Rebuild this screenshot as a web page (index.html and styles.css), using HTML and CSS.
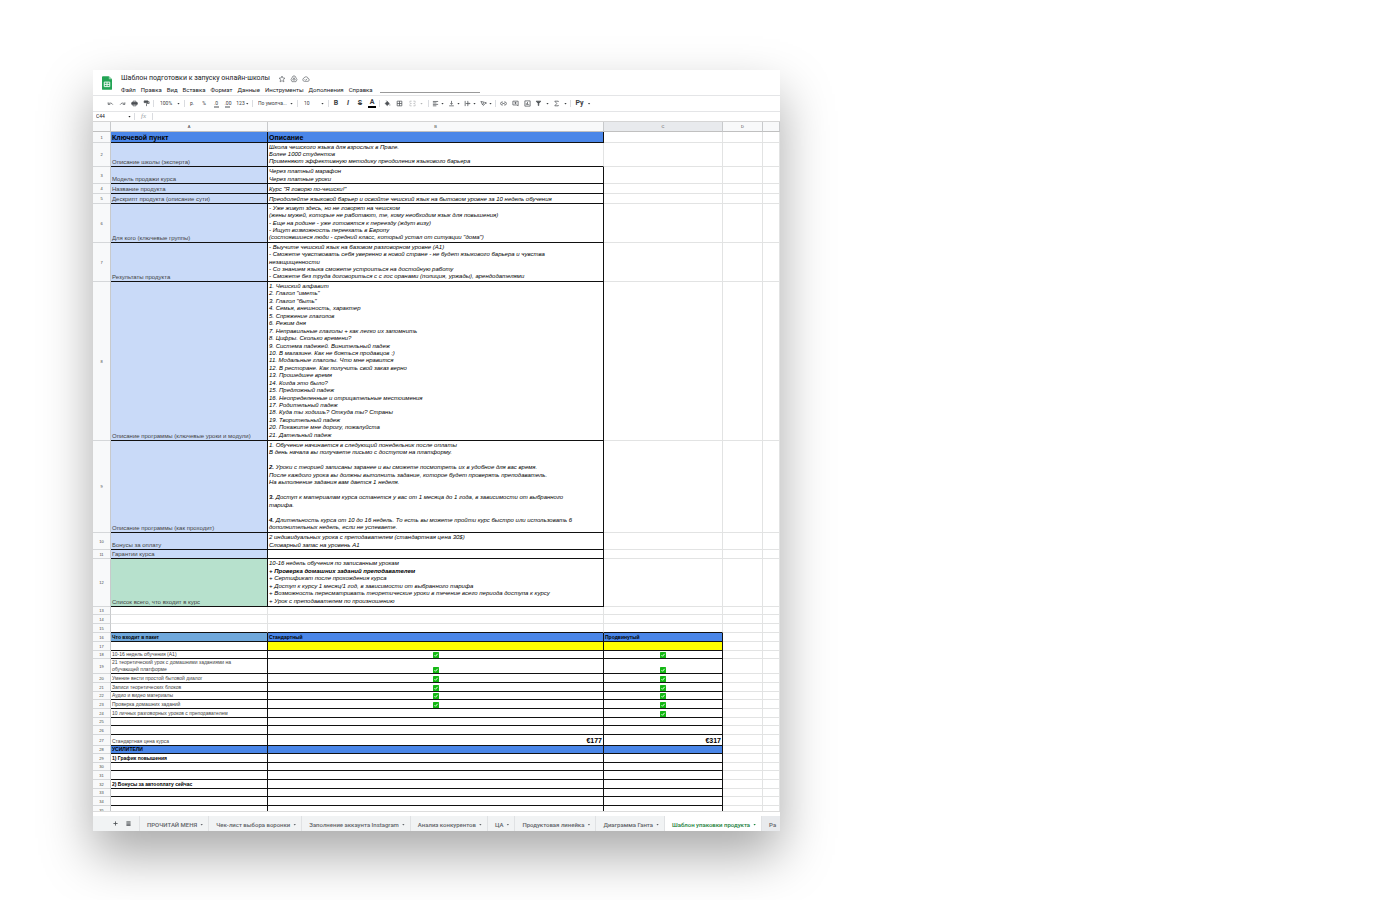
FILE: index.html
```html
<!DOCTYPE html>
<html lang="ru">
<head>
  <meta charset="UTF-8" />
  <meta name="viewport" content="width=device-width, initial-scale=1" />
  <title>Шаблон подготовки к запуску онлайн-школы</title>
  <link rel="stylesheet" href="styles.css">
</head>
<body>
  <svg class="defs" aria-hidden="true">
    <symbol id="check" viewBox="0 0 12 12">
      <rect width="12" height="12" rx="1" fill="#13b713"/>
      <path d="M3 6.5l2 2L9.3 3.6" fill="none" stroke="#fff" stroke-width="1.8"/>
    </symbol>
  </svg>

  <main class="sheet">
    <header class="header">
      <svg class="logo" viewBox="0 0 22 30">
        <path d="M2 0h13l7 7v21a2 2 0 0 1-2 2H2a2 2 0 0 1-2-2V2a2 2 0 0 1 2-2z" fill="#23a455"/>
        <path d="M15 0l7 7h-7z" fill="#8ed1a9"/>
        <path d="M5 13h12v10H5zM5 18h12M11 13v10" fill="none" stroke="#fff" stroke-width="2"/>
      </svg>
      <div class="heading">
        <div class="title-row">
          <h1>Шаблон подготовки к запуску онлайн-школы</h1>
          <button class="mini" aria-label="Пометить"><svg viewBox="0 0 24 24"><path d="M12 3l2.700 6 6.300.6-4.800 4.300 1.400 6.600L12 17l-5.600 3.500 1.400-6.600L3 9.600 9.300 9z"/></svg></button>
          <button class="mini" aria-label="Переместить"><svg viewBox="0 0 24 24"><path d="M9 3h6l6 11-3 6H6l-3-6zM12 8l-4 7h8z"/></svg></button>
          <button class="mini" aria-label="Сохранено"><svg viewBox="0 0 24 24"><path d="M7 19a5 5 0 0 1-1-9.800 6.500 6.500 0 0 1 12.300 1A4.500 4.500 0 0 1 18 19zM8 13l3 3 5-5"/></svg></button>
        </div>
        <nav class="menu">
          <button>Файл</button>
          <button>Правка</button>
          <button>Вид</button>
          <button>Вставка</button>
          <button>Формат</button>
          <button>Данные</button>
          <button>Инструменты</button>
          <button>Дополнения</button>
          <button>Справка</button>
          <span class="saved"></span>
        </nav>
      </div>
    </header>

    <div class="toolbar">
      <button class="tool" aria-label="Отменить"><svg viewBox="0 0 24 24"><path d="M4 8v7h7M5 14c4-5 11-5 15 2"/></svg></button>
      <button class="tool" aria-label="Повторить"><svg viewBox="0 0 24 24"><path d="M20 8v7h-7M19 14c-4-5-11-5-15 2"/></svg></button>
      <button class="tool" aria-label="Печать"><svg viewBox="0 0 24 24"><path d="M7 8V4h10v4M6 16H3V9h18v7h-3M7 14h10v6H7z"/><path class="fill" d="M3 9h18v5H3z"/></svg></button>
      <button class="tool" aria-label="Формат"><svg viewBox="0 0 24 24"><path class="fill" d="M4 3h13v6H4z"/><path d="M17 6h4v6h-9v9"/></svg></button>
      <span class="sep"></span>
      <label class="picker picker-zoom"><select aria-label="Масштаб"><option>100%</option></select><i class="caret"></i></label>
      <span class="sep"></span>
      <button class="tool">р.</button>
      <button class="tool">%</button>
      <button class="tool decimals">.0<svg class="under" viewBox="0 0 12 4"><path d="M12 2H2"/></svg></button>
      <button class="tool decimals">.00<svg class="under" viewBox="0 0 12 4"><path d="M0 2h10"/></svg></button>
      <button class="tool wide">123<i class="caret"></i></button>
      <span class="sep"></span>
      <label class="picker picker-font"><select aria-label="Шрифт"><option>По умолча...</option></select><i class="caret"></i></label>
      <span class="sep"></span>
      <label class="picker picker-size"><select aria-label="Размер"><option>10</option></select><i class="caret"></i></label>
      <span class="sep"></span>
      <button class="tool letter">B</button>
      <button class="tool letter italic">I</button>
      <button class="tool letter strike">S</button>
      <button class="tool letter"><span class="text-color">A</span></button>
      <span class="sep"></span>
      <button class="tool" aria-label="Заливка"><svg viewBox="0 0 24 24"><path class="fill" d="M4 12l7-7 7 7-7 7z"/><path d="M8 2l4 4M20 15v4"/></svg></button>
      <button class="tool" aria-label="Границы"><svg viewBox="0 0 24 24"><path d="M4 4h16v16H4zM4 12h16M12 4v16"/></svg></button>
      <button class="tool merge" aria-label="Объединить"><svg viewBox="0 0 24 24"><path d="M9 4H3v5M15 4h6v5M9 20H3v-5M15 20h6v-5M3 12h6M15 12h6"/></svg><i class="caret"></i></button>
      <span class="sep"></span>
      <button class="tool drop" aria-label="По горизонтали"><svg viewBox="0 0 24 24"><path d="M3 5h18M3 10h12M3 15h18M3 20h12"/></svg><i class="caret"></i></button>
      <button class="tool drop" aria-label="По вертикали"><svg viewBox="0 0 24 24"><path d="M4 20h16M12 3v12M8 11l4 4 4-4"/></svg><i class="caret"></i></button>
      <button class="tool drop" aria-label="Перенос"><svg viewBox="0 0 24 24"><path d="M4 3v18M13 3v18M6 12h14M17 9l3 3-3 3"/></svg><i class="caret"></i></button>
      <button class="tool drop" aria-label="Поворот"><svg viewBox="0 0 24 24"><path d="M3 5l6 12 4-9M3 5l13 3M10 20L21 9M17 9h4v4"/></svg><i class="caret"></i></button>
      <span class="sep"></span>
      <button class="tool" aria-label="Ссылка"><svg viewBox="0 0 24 24"><path d="M10 7H7a5 5 0 0 0 0 10h3M14 7h3a5 5 0 0 1 0 10h-3M8 12h8"/></svg></button>
      <button class="tool" aria-label="Комментарий"><svg viewBox="0 0 24 24"><path d="M3 4h18v16l-4-3H3zM12 7v7M8 10h8"/></svg></button>
      <button class="tool" aria-label="Диаграмма"><svg viewBox="0 0 24 24"><path d="M3 3h18v18H3zM8 17v-6M12 17V7M16 17v-3"/></svg></button>
      <button class="tool drop-lg" aria-label="Фильтр"><svg viewBox="0 0 24 24"><path class="fill" d="M4 4h16l-7 8v7h-2v-7z"/></svg><i class="caret"></i></button>
      <button class="tool drop-lg" aria-label="Функции"><svg viewBox="0 0 24 24"><path d="M18 7V4H6l7 8-7 8h12v-3"/></svg><i class="caret"></i></button>
      <span class="sep"></span>
      <button class="tool letter script">Ру<i class="caret"></i></button>
    </div>

    <div class="formula-bar">
      <input class="cell-name" type="text" value="C44" aria-label="Ячейка">
      <i class="caret"></i>
      <span class="sep"></span>
      <label class="fx" for="formula">fx</label>
      <span class="sep"></span>
      <input class="formula" id="formula" type="text">
    </div>

    <div class="grid">
      <table>
        <colgroup>
          <col class="col-num"><col class="col-a"><col><col class="col-c"><col class="col-d"><col class="col-e">
        </colgroup>
        <thead>
          <tr><th></th><th>A</th><th>B</th><th class="active">C</th><th>D</th><th></th></tr>
        </thead>
        <tbody class="plan">
          <tr class="h11 head"><th>1</th><td>Ключевой пункт</td><td>Описание</td><td></td><td></td><td></td></tr>
          <tr class="h24 open"><th>2</th><td>Описание школы (эксперта)</td><td><div class="lines">
            <span>Школа чешского языка для взрослых в Праге.</span>
            <span>Более 1000 студентов</span>
            <span>Применяют эффективную методику преодоления языкового барьера</span>
          </div></td><td></td><td></td><td></td></tr>
          <tr class="h17"><th>3</th><td>Модель продажи курса</td><td><div class="lines">
            <span>Через платный марафон</span>
            <span>Через платные уроки</span>
          </div></td><td></td><td></td><td></td></tr>
          <tr class="h10"><th>4</th><td>Название продукта</td><td>Курс "Я говорю по-чешски!"</td><td></td><td></td><td></td></tr>
          <tr class="h10"><th>5</th><td>Дескрипт продукта (описание сути)</td><td>Преодолейте языковой барьер и освойте чешский язык на бытовом уровне за 10 недель обучения</td><td></td><td></td><td></td></tr>
          <tr class="h39"><th>6</th><td>Для кого (ключевые группы)</td><td><div class="lines">
            <span>- Уже живут здесь, но не говорят на чешском</span>
            <span>(жены мужей, которые не работают, те, кому необходим язык для повышения)</span>
            <span>- Еще на родине - уже готовятся к переезду (ждут визу)</span>
            <span>- Ищут возможность переехать в Европу</span>
            <span>(состоявшиеся люди - средний класс, который устал от ситуации "дома")</span>
          </div></td><td></td><td></td><td></td></tr>
          <tr class="h39"><th>7</th><td>Результаты продукта</td><td><div class="lines">
            <span>- Выучите чешский язык на базовом разговорном уровне (А1)</span>
            <span>- Сможете чувствовать себя уверенно в новой стране - не будет языкового барьера и чувства</span>
            <span>незащищенности</span>
            <span>- Со знанием языка сможете устроиться на достойную работу</span>
            <span>- Сможете без труда договориться с с гос оранами (полиция, уржады), арендодателями</span>
          </div></td><td></td><td></td><td></td></tr>
          <tr class="h159"><th>8</th><td>Описание программы (ключевые уроки и модули)</td><td><div class="lines">
            <span>1. Чешский алфавит</span>
            <span>2. Глагол "иметь"</span>
            <span>3. Глагол "быть"</span>
            <span>4. Семья, внешность, характер</span>
            <span>5. Спряжение глаголов</span>
            <span>6. Режим дня</span>
            <span>7. Неправильные глаголы + как легко их запомнить</span>
            <span>8. Цифры. Сколько времени?</span>
            <span>9. Система падежей. Винительный падеж</span>
            <span>10. В магазине. Как не бояться продавцов :)</span>
            <span>11. Модальные глаголы. Что мне нравится</span>
            <span>12. В ресторане. Как получить свой заказ верно</span>
            <span>13. Прошедшее время</span>
            <span>14. Когда это было?</span>
            <span>15. Предложный падеж</span>
            <span>16. Неопределенные и отрицательные местоимения</span>
            <span>17. Родительный падеж</span>
            <span>18. Куда ты ходишь? Откуда ты? Страны</span>
            <span>19. Творительный падеж</span>
            <span>20. Покажите мне дорогу, пожалуйста</span>
            <span>21. Дательный падеж</span>
          </div></td><td></td><td></td><td></td></tr>
          <tr class="h92"><th>9</th><td>Описание программы (как проходит)</td><td><div class="lines">
            <span>1. Обучение начинается в следующий понедельник после оплаты</span>
            <span>В день начала вы получаете письмо с доступом на платформу.</span>
            <span></span>
            <span><b>2.</b> Уроки с теорией записаны заранее и вы сможете посмотреть их в удобное для вас время.</span>
            <span>После каждого урока вы должны выполнить задание, которое будет проверять преподаватель.</span>
            <span>На выполнение задания вам дается 1 неделя.</span>
            <span></span>
            <span><b>3.</b> Доступ к материалам курса останется у вас от 1 месяца до 1 года, в зависимости от выбранного</span>
            <span>тарифа.</span>
            <span></span>
            <span><b>4.</b> Длительность курса от 10 до 16 недель. То есть вы можете пройти курс быстро или использовать 6</span>
            <span>дополнительных недель, если не успеваете.</span>
          </div></td><td></td><td></td><td></td></tr>
          <tr class="h17"><th>10</th><td>Бонусы за оплату</td><td><div class="lines">
            <span>2 индивидуальных урока с преподавателем (стандартная цена 30$)</span>
            <span>Словарный запас на уровень А1</span>
          </div></td><td></td><td></td><td></td></tr>
          <tr><th>11</th><td>Гарантии курса</td><td></td><td></td><td></td><td></td></tr>
          <tr class="h48 total"><th>12</th><td>Список всего, что входит в курс</td><td><div class="lines">
            <span>10-16 недель обучения по записанным урокам</span>
            <span><b>+ Проверка домашних заданий преподавателем</b></span>
            <span>+ Сертификат после прохождения курса</span>
            <span>+ Доступ к курсу 1 месяц/1 год, в зависимости от выбранного тарифа</span>
            <span>+ Возможность пересматривать теоретические уроки в течение всего периода доступа к курсу</span>
            <span>+ Урок с преподавателем по произношению</span>
          </div></td><td></td><td></td><td></td></tr>
        </tbody>
        <tbody class="blank">
          <tr class="h8"><th>13</th><td></td><td></td><td></td><td></td><td></td></tr>
          <tr><th>14</th><td></td><td></td><td></td><td></td><td></td></tr>
          <tr class="last"><th>15</th><td></td><td></td><td></td><td></td><td></td></tr>
        </tbody>
        <tbody class="pack">
          <tr class="head"><th>16</th><td>Что входит в пакет</td><td>Стандартный</td><td>Продвинутый</td><td></td><td></td></tr>
          <tr class="promo"><th>17</th><td></td><td></td><td></td><td></td><td></td></tr>
          <tr class="h8"><th>18</th><td>10-16 недель обучения (А1)</td><td class="mark"><svg><use href="#check"/></svg></td><td class="mark"><svg><use href="#check"/></svg></td><td></td><td></td></tr>
          <tr class="h15"><th>19</th><td>21 теоретический урок с домашними заданиями на<br>обучающей платформе</td><td class="mark"><svg><use href="#check"/></svg></td><td class="mark"><svg><use href="#check"/></svg></td><td></td><td></td></tr>
          <tr><th>20</th><td>Умение вести простой бытовой диалог</td><td class="mark"><svg><use href="#check"/></svg></td><td class="mark"><svg><use href="#check"/></svg></td><td></td><td></td></tr>
          <tr><th>21</th><td>Записи теоретических блоков</td><td class="mark"><svg><use href="#check"/></svg></td><td class="mark"><svg><use href="#check"/></svg></td><td></td><td></td></tr>
          <tr class="h8"><th>22</th><td>Аудио и видео материалы</td><td class="mark"><svg><use href="#check"/></svg></td><td class="mark"><svg><use href="#check"/></svg></td><td></td><td></td></tr>
          <tr><th>23</th><td>Проверка домашних заданий</td><td class="mark"><svg><use href="#check"/></svg></td><td class="mark"><svg><use href="#check"/></svg></td><td></td><td></td></tr>
          <tr><th>24</th><td>10 личных разговорных уроков с преподавателем</td><td></td><td class="mark"><svg><use href="#check"/></svg></td><td></td><td></td></tr>
          <tr class="h8"><th>25</th><td></td><td></td><td></td><td></td><td></td></tr>
          <tr><th>26</th><td></td><td></td><td></td><td></td><td></td></tr>
          <tr class="h11 price"><th>27</th><td>Стандартная цена курса</td><td>€177</td><td>€317</td><td></td><td></td></tr>
          <tr class="band h8"><th>28</th><td>УСИЛИТЕЛИ</td><td></td><td></td><td></td><td></td></tr>
          <tr class="strong"><th>29</th><td>1) График повышения</td><td></td><td></td><td></td><td></td></tr>
          <tr class="h8"><th>30</th><td></td><td></td><td></td><td></td><td></td></tr>
          <tr><th>31</th><td></td><td></td><td></td><td></td><td></td></tr>
          <tr class="strong"><th>32</th><td>2) Бонусы за автооплату сейчас</td><td></td><td></td><td></td><td></td></tr>
          <tr class="h8"><th>33</th><td></td><td></td><td></td><td></td><td></td></tr>
          <tr><th>34</th><td></td><td></td><td></td><td></td><td></td></tr>
          <tr><th>35</th><td></td><td></td><td></td><td></td><td></td></tr>
        </tbody>
      </table>
    </div>
    <div class="scroll-strip"></div>

    <footer class="tabs">
      <button class="tab-tool" aria-label="Добавить лист"><svg viewBox="0 0 12 12"><path d="M6 1v10M1 6h10"/></svg></button>
      <button class="tab-tool" aria-label="Все листы"><svg viewBox="0 0 12 12"><path d="M1 2h10M1 5h10M1 8h10M1 11h10"/></svg></button>
      <button class="tab first">ПРОЧИТАЙ МЕНЯ<i class="caret"></i></button>
      <button class="tab">Чек-лист выбора воронки<i class="caret"></i></button>
      <button class="tab">Заполнение аккаунта Instagram<i class="caret"></i></button>
      <button class="tab">Анализ конкурентов<i class="caret"></i></button>
      <button class="tab">ЦА<i class="caret"></i></button>
      <button class="tab">Продуктовая линейка<i class="caret"></i></button>
      <button class="tab">Диаграмма Ганта<i class="caret"></i></button>
      <button class="tab current">Шаблон упаковки продукта<i class="caret"></i></button>
      <button class="tab next">Ра</button>
    </footer>
  </main>
</body>
</html>
```
FILE: styles.css
```css
* {
  box-sizing: border-box;
}

body {
  margin: 0;
  padding: 70px 93px;
  background: #fff;
  font-family: Roboto, "Liberation Sans", sans-serif;
  font-size: 6px;
  line-height: 7px;
  color: #202124;
}

button,
input,
select {
  margin: 0;
  padding: 0;
  border: none;
  border-radius: 0;
  background: none;
  font: inherit;
  color: inherit;
  appearance: none;
}

button {
  cursor: pointer;
}

.defs {
  display: none;
}

.sheet {
  max-width: 687px;
  overflow: hidden;
  background: #fff;
  box-shadow: 0 24px 48px rgba(0, 0, 0, 0.34);
}

/* header */
.header {
  display: flex;
  gap: 9px;
  padding: 4px 9px 1px;
  border-bottom: 1px solid #e4e5e7;
}

.logo {
  width: 10px;
  height: 14px;
  margin-top: 2px;
}

.heading {
  flex: 1;
}

.title-row {
  display: flex;
  align-items: center;
  gap: 4px;
  height: 9px;
}

h1 {
  margin: 0 4px 0 0;
  font-size: 7px;
  line-height: 9px;
  font-weight: 400;
}

.mini {
  display: flex;
}

.mini svg {
  width: 8px;
  height: 8px;
  fill: none;
  stroke: #5f6368;
  stroke-width: 2;
}

.menu {
  display: flex;
  align-items: center;
  gap: 5px;
  height: 11px;
  padding-top: 1px;
  font-size: 6px;
}

.menu button {
  white-space: nowrap;
}

.saved {
  width: 100px;
  height: 7px;
  margin-left: 2px;
  border-bottom: 1px solid #9a9a9a;
}

/* toolbar */
.toolbar {
  display: flex;
  align-items: center;
  height: 16px;
  padding-left: 11px;
  border-bottom: 1px solid #e4e5e7;
  font-size: 5px;
  color: #3c4043;
}

.tool {
  display: flex;
  align-items: center;
  justify-content: center;
  width: 12px;
  height: 12px;
}

.tool svg {
  width: 7px;
  height: 7px;
  fill: none;
  stroke: #4c5054;
  stroke-width: 2.5;
}

.tool svg .fill {
  fill: #4c5054;
}

.decimals {
  flex-direction: column;
  line-height: 6px;
}

.tool .under {
  width: 6px;
  height: 2px;
  stroke-width: 2;
}

.sep {
  width: 1px;
  height: 7px;
  margin: 0 1px;
  background: #dadce0;
}

.caret {
  width: 3px;
  height: 2px;
  background: currentColor;
  clip-path: polygon(0 0, 100% 0, 50% 100%);
}

.picker {
  display: flex;
  align-items: center;
  justify-content: space-between;
  padding: 0 3px 0 5px;
}

.picker select {
  flex: 1;
  min-width: 0;
}

.picker-zoom,
.picker-size {
  width: 28px;
}

.picker-font {
  width: 42px;
  padding-left: 4px;
}

.wide {
  width: 17px;
  gap: 1px;
}

.letter {
  font-size: 7px;
  font-weight: 700;
}

.italic {
  font-style: italic;
}

.strike {
  text-decoration: line-through;
}

.text-color {
  width: 8px;
  height: 9px;
  border-bottom: 2px solid #000;
}

.merge {
  width: 22px;
  gap: 4px;
  opacity: 0.4;
}

.drop {
  width: 16px;
  gap: 2px;
}

.drop-lg {
  width: 18px;
  gap: 4px;
}

.script {
  width: 22px;
  gap: 4px;
}

/* formula bar */
.formula-bar {
  display: flex;
  align-items: center;
  height: 10px;
  padding-left: 3px;
  border-bottom: 1px solid #d5d5d5;
}

.cell-name {
  width: 32px;
  font-size: 5px;
}

.formula-bar .sep {
  margin: 0 3px;
}

.fx {
  width: 11px;
  font: italic 7px/7px "Liberation Serif", serif;
  text-align: center;
  color: #9aa0a6;
}

.formula {
  flex: 1;
}

/* grid */
.grid {
  max-height: 689px;
  overflow: hidden;
  font-family: "Liberation Sans", Arial, sans-serif;
}

table {
  width: 100%;
  table-layout: fixed;
  border-collapse: separate;
  border-spacing: 0;
}

.col-num {
  width: 18px;
}

.col-a {
  width: 157px;
}

.col-c {
  width: 119px;
}

.col-d {
  width: 40px;
}

.col-e {
  width: 17px;
}

th {
  height: 9px;
  padding: 0;
  border-right: 1px solid #c8cacc;
  border-bottom: 1px solid #d5d7d9;
  background: #f8f9fa;
  font-size: 4px;
  font-weight: 400;
  color: #444;
}

thead th {
  height: 10px;
  border-bottom-color: #c0c0c0;
}

th.active {
  background: #e8eaed;
}

td {
  height: 9px;
  padding: 0 1px;
  border-right: 1px solid #e2e3e3;
  border-bottom: 1px solid #e2e3e3;
  vertical-align: bottom;
  white-space: nowrap;
}

th,
td {
  line-height: 7px;
}

.h8 > * { height: 8px; }
.h10 > * { height: 10px; }
.h11 > * { height: 11px; }
.h15 > * { height: 15px; }
.h17 > * { height: 17px; }
.h24 > * { height: 24px; }
.h39 > * { height: 39px; }
.h48 > * { height: 48px; }
.h92 > * { height: 92px; }
.h159 > * { height: 159px; }

.plan td:nth-child(2),
.plan td:nth-child(3),
.pack td:nth-child(-n+4) {
  border-color: #111;
}

.plan td:nth-child(2) {
  background: #c9daf8;
  color: #434343;
}

.plan td:nth-child(3) {
  font-style: italic;
  color: #000;
}

.plan .open td:nth-child(3) {
  border-right-color: #e2e3e3;
}

.plan .head td:nth-child(2),
.plan .head td:nth-child(3) {
  background: #4a86e8;
  font-size: 7px;
  font-style: normal;
  font-weight: 700;
  color: #000;
  vertical-align: middle;
}

.plan .total td:nth-child(2) {
  background: #b7e1cd;
}

/* several lines spread over the height of the row */
.lines {
  display: flex;
  flex-direction: column;
  justify-content: space-between;
  height: 100%;
  padding: 1px 0;
}

.h17 .lines {
  padding: 1px 0 0;
}

.lines span {
  height: 7px;
}

.blank .last td:nth-child(-n+4) {
  border-bottom-color: #111;
}

.pack td {
  font-size: 5px;
  color: #434343;
}

.pack .head td,
.pack .strong td,
.pack .band td {
  font-weight: 700;
  color: #000;
}

.pack .head td:nth-child(2) {
  background: #6fa8dc;
}

.pack .head td:nth-child(3),
.pack .head td:nth-child(4),
.pack .band td:nth-child(-n+4) {
  background: #4a86e8;
}

.pack .promo td:nth-child(3),
.pack .promo td:nth-child(4) {
  background: #ff0;
}

.mark {
  text-align: center;
}

.mark svg {
  display: block;
  width: 6px;
  height: 6px;
  margin: 0 auto;
}

.pack .price td:nth-child(n+3) {
  font-size: 7px;
  font-weight: 700;
  text-align: right;
  color: #000;
  vertical-align: middle;
}

.scroll-strip {
  height: 5px;
  border-top: 1px solid #dcdcdc;
}

/* sheet tabs */
.tabs {
  display: flex;
  height: 15px;
  padding-left: 16px;
  overflow: hidden;
  background: #f1f3f4;
  color: #5f6368;
}

.tab-tool {
  display: flex;
  align-items: center;
  justify-content: center;
  flex: none;
  width: 13px;
}

.tab-tool svg {
  width: 5px;
  height: 5px;
  fill: none;
  stroke: #4c5054;
  stroke-width: 2;
}

.tab {
  display: flex;
  align-items: center;
  flex: none;
  gap: 3px;
  padding: 2px 5px 0 7px;
  border-right: 1px solid #e0e2e4;
  font-weight: 500;
  white-space: nowrap;
}

.first {
  margin-left: 4px;
  border-left: 1px solid #e0e2e4;
}

.current {
  background: #fff;
  color: #188038;
}

.next {
  background: #e8eaed;
}
```
